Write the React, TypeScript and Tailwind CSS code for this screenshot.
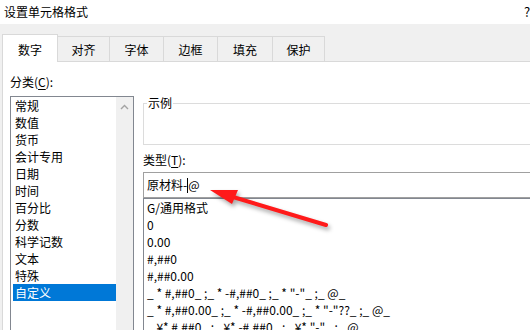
import React from 'react';

const categories = [
  '常规',
  '数值',
  '货币',
  '会计专用',
  '日期',
  '时间',
  '百分比',
  '分数',
  '科学记数',
  '文本',
  '特殊',
  '自定义',
];

const formats = [
  'G/通用格式',
  '0',
  '0.00',
  '#,##0',
  '#,##0.00',
  '_ * #,##0_ ;_ * -#,##0_ ;_ * "-"_ ;_ @_',
  '_ * #,##0.00_ ;_ * -#,##0.00_ ;_ * "-"??_ ;_ @_',
  '_ ¥* #,##0_ ;_ ¥* -#,##0_ ;_ ¥* "-"_ ;_ @_',
  '_ ¥* #,##0.00_ ;_ ¥* -#,##0.00_ ;_ ¥* "-"??_ ;_ @_',
];

const tabs = [
  { label: '对齐', w: 'w-[52px]' },
  { label: '字体', w: 'w-[54px]' },
  { label: '边框', w: 'w-[54px]' },
  { label: '填充', w: 'w-[55px]' },
  { label: '保护', w: 'w-[52px]' },
];

export default function App() {
  return (
    <div className="relative w-[530px] h-[330px] overflow-hidden bg-[#f0f0f0] text-[12px] text-black font-['Microsoft_YaHei_UI','Noto_Sans_CJK_SC',sans-serif]">
      {/* Title bar */}
      <div className="h-[24px] bg-white flex items-center justify-between pl-[4px] pr-0">
        <span className="leading-[16px]">设置单元格格式</span>
        <span className="w-[6px] overflow-hidden leading-[16px] text-[13px]">?</span>
      </div>

      {/* Tabs */}
      <div className="mt-[10px] ml-[2px] flex items-end h-[27px]">
        <div className="relative z-10 -mb-px h-[28px] w-[56px] bg-white border-l border-t border-r border-[#d9d9d9] flex items-center justify-center pt-[2px]">
          数字
        </div>
        {tabs.map((t) => (
          <div
            key={t.label}
            className={`h-[25px] ${t.w} border-t border-r border-[#d9d9d9] flex items-center justify-center pt-[2px]`}
          >
            {t.label}
          </div>
        ))}
      </div>

      {/* Panel */}
      <div className="ml-[2px] h-[300px] bg-white border-t border-l border-[#d9d9d9] flex">
        {/* Left column */}
        <div className="pl-[7px] pt-[11px] w-[131px] shrink-0 flex flex-col">
          <div className="leading-[17px] h-[17px]">
            分类(<span className="underline underline-offset-2">C</span>):
          </div>
          <div className="mt-[6px] w-[124px] h-[260px] border border-[#828790] flex">
            <div className="flex-1 pl-[2px]">
              {categories.map((c) => (
                <div
                  key={c}
                  className={`h-[17px] leading-[17px] pl-[2px] ${
                    c === '自定义' ? 'bg-[#0078d7] text-white' : ''
                  }`}
                >
                  {c}
                </div>
              ))}
            </div>
            <div className="w-[17px] bg-[#f0f0f0] flex justify-center pt-[7px]">
              <svg width="9" height="6" viewBox="0 0 9 6">
                <path d="M1 5 L4.5 1.5 L8 5" fill="none" stroke="#a3a3a3" strokeWidth="1.4" />
              </svg>
            </div>
          </div>
        </div>

        {/* Right column */}
        <div className="ml-[9px] w-[400px] shrink-0 flex flex-col">
          <fieldset className="mt-[34px] h-[49px] border border-[#dcdcdc]">
            <legend className="ml-[3px] px-[1px] leading-[14px]">示例</legend>
          </fieldset>
          <div className="mt-[6px] leading-[17px] h-[17px]">
            类型(<span className="underline underline-offset-2">T</span>):
          </div>
          <div className="mt-[4px] h-[26px] border border-[#a0a0a0] flex items-center pl-[3px]">
            <span>原材料-</span>
            <span className="inline-block w-px h-[15px] bg-black" />
            <span>@</span>
          </div>
          <div className="flex-1 border-l border-t border-[#828790] pl-[3px]">
            {formats.map((f) => (
              <div key={f} className="h-[17px] leading-[17px] whitespace-pre">
                {f}
              </div>
            ))}
          </div>
        </div>
      </div>

      {/* Red annotation arrow */}
      <svg
        className="absolute inset-0 pointer-events-none drop-shadow-[2px_3px_2px_rgba(0,0,0,0.35)]"
        width="530"
        height="330"
        viewBox="0 0 530 330"
      >
        <line x1="326" y1="225" x2="228" y2="195.5" stroke="#ff1a1a" strokeWidth="4" strokeLinecap="round" />
        <polygon points="210,190 238,190 232,204" fill="#ff1a1a" />
      </svg>
    </div>
  );
}
